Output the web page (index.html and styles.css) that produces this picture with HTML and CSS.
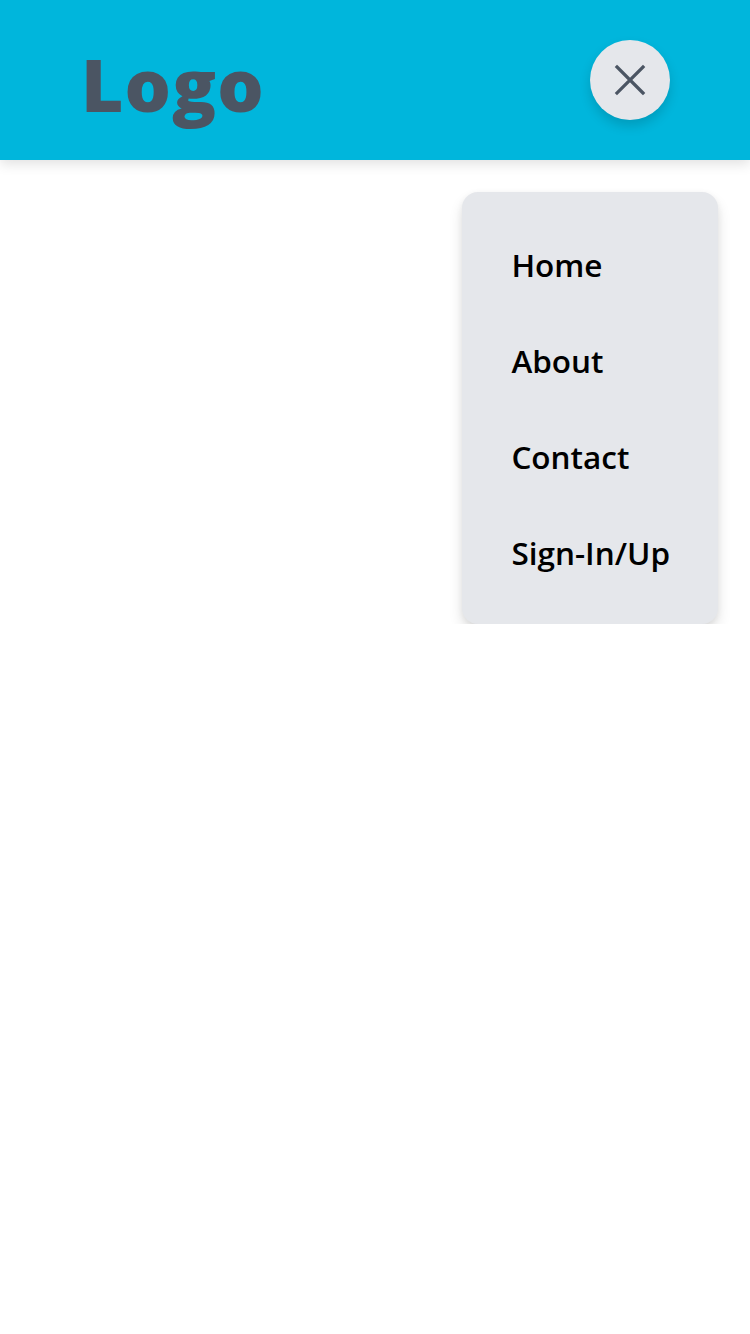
FILE: index.html
```html
<!DOCTYPE html>
<html lang="en">
<head>
<meta charset="utf-8">
<title>Logo</title>
<link rel="stylesheet" href="styles.css">
</head>
<body>
<header class="header">
  <div class="logo">Logo</div>
  <button class="close-btn" aria-label="Close menu">
    <svg width="32" height="32" viewBox="0 0 32 32" fill="none" stroke="#4b5563" stroke-width="3.2" stroke-linecap="square">
      <path d="M3 3 L29 29 M29 3 L3 29"/>
    </svg>
  </button>
</header>
<div class="menu-wrap">
  <nav class="menu">
    <a class="menu-item" href="#">Home</a>
    <a class="menu-item" href="#">About</a>
    <a class="menu-item" href="#">Contact</a>
    <a class="menu-item" href="#">Sign-In/Up</a>
  </nav>
</div>
</body>
</html>
```
FILE: styles.css
```css
* { box-sizing: border-box; }
html, body { margin: 0; padding: 0; background: #ffffff; }
body { font-family: "Open Sans", "Noto Sans", sans-serif; }

.header {
  height: 160px;
  background: #00b6dc;
  display: flex;
  align-items: center;
  justify-content: space-between;
  padding: 0 80px 0 81px;
  box-shadow: 0 4px 12px rgba(0,0,0,0.12);
  position: relative;
  z-index: 1;
}
.logo {
  font-family: "Open Sans", sans-serif;
  font-weight: 800;
  font-size: 73px;
  color: #4b5563;
  line-height: 1;
  letter-spacing: 1px;
  margin-top: 6px;
}
.close-btn {
  width: 80px;
  height: 80px;
  border-radius: 50%;
  border: none;
  background: #e5e7eb;
  display: flex;
  align-items: center;
  justify-content: center;
  box-shadow: 0 6px 12px rgba(0,0,0,0.15);
  padding: 0;
}
.menu-wrap {
  display: flex;
  justify-content: flex-end;
  padding: 32px 32px 0 0;
}
.menu {
  background: #e5e7eb;
  border-radius: 16px;
  padding: 24px 48px 24px 49px;
  display: flex;
  flex-direction: column;
  box-shadow: 0 8px 14px rgba(0,0,0,0.12), 0 2px 6px rgba(0,0,0,0.06);
}
.menu-item {
  height: 96px;
  display: flex;
  align-items: center;
  font-size: 31.5px;
  font-weight: 600;
  color: #000;
  text-decoration: none;
}
```
